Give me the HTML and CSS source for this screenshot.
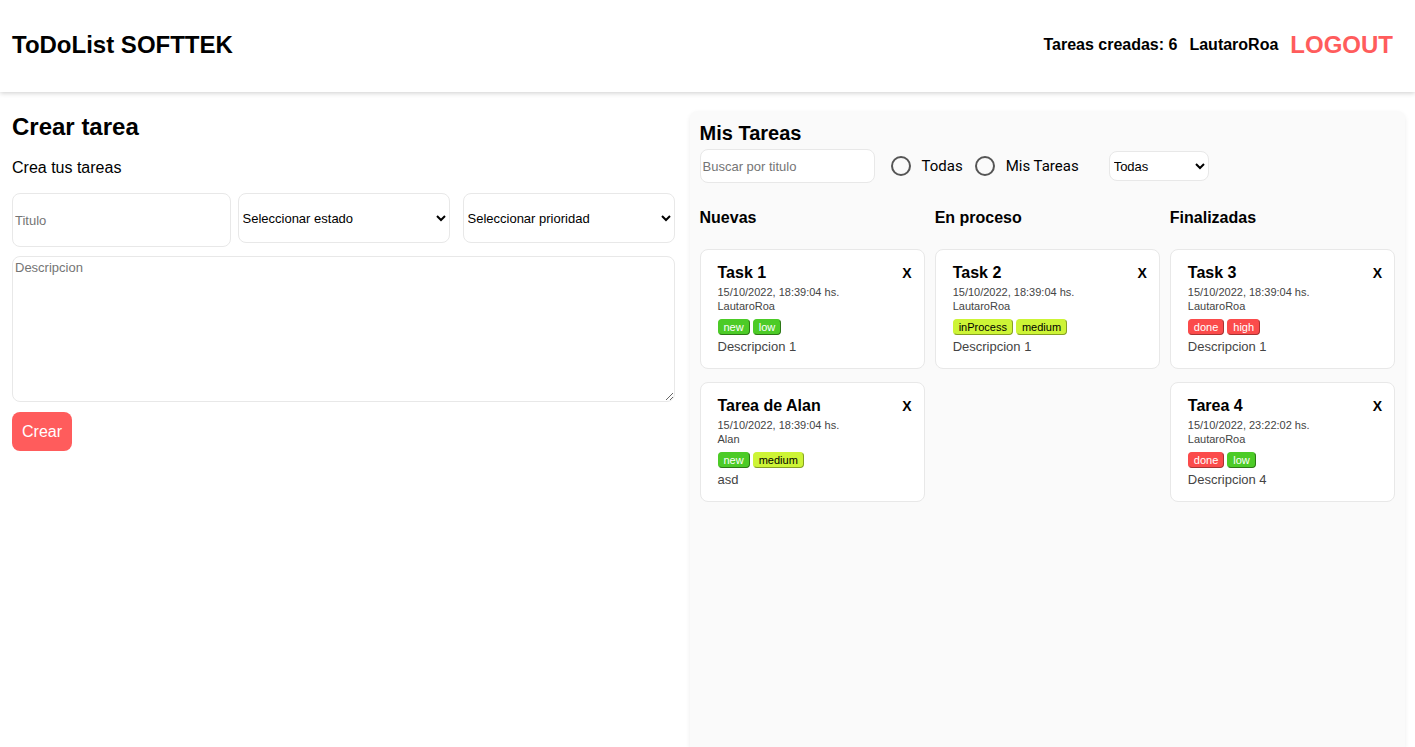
FILE: index.html
```html
<!DOCTYPE html>
<html lang="es">
<head>
<meta charset="utf-8">
<meta name="viewport" content="width=device-width, initial-scale=1">
<title>ToDoList SOFTTEK</title>
<link rel="stylesheet" href="styles.css">
</head>
<body>
<header class="header">
  <h1 class="brand">ToDoList SOFTTEK</h1>
  <div class="account">
    <span class="account-text">Tareas creadas: 6</span>
    <span class="account-text">LautaroRoa</span>
    <button class="logout" type="button">LOGOUT</button>
  </div>
</header>
<main class="main">
  <section class="create">
    <h2 class="create-title">Crear tarea</h2>
    <p class="create-lead">Crea tus tareas</p>
    <form class="form">
      <div class="fields">
        <input class="field field-title" type="text" placeholder="Titulo" aria-label="Titulo">
        <div class="selects">
          <select class="field field-select" aria-label="Estado"><option>Seleccionar estado</option><option>new</option><option>inProcess</option><option>done</option></select>
          <select class="field field-select" aria-label="Prioridad"><option>Seleccionar prioridad</option><option>low</option><option>medium</option><option>high</option></select>
        </div>
      </div>
      <textarea class="field field-description" placeholder="Descripcion" aria-label="Descripcion"></textarea>
      <button class="submit" type="button">Crear</button>
    </form>
  </section>
  <section class="panel">
    <h2 class="panel-title">Mis Tareas</h2>
    <div class="filters">
      <input class="field search" type="text" placeholder="Buscar por titulo" aria-label="Buscar por titulo">
      <div class="radios">
        <label class="radio-label"><input class="radio" type="radio" name="owner">Todas</label>
        <label class="radio-label"><input class="radio" type="radio" name="owner">Mis Tareas</label>
      </div>
      <select class="field priority-filter" aria-label="Filtrar por prioridad"><option>Todas</option><option>low</option><option>medium</option><option>high</option></select>
    </div>
    <div class="board">
      <div class="column">
        <h3 class="column-title">Nuevas</h3>
        <article class="card">
          <div class="card-head"><h4 class="card-title">Task 1</h4><button class="card-close" type="button">X</button></div>
          <p class="card-meta">15/10/2022, 18:39:04 hs.</p>
          <p class="card-meta">LautaroRoa</p>
          <div class="badges"><button class="badge green" type="button">new</button><button class="badge green" type="button">low</button></div>
          <p class="card-text">Descripcion 1</p>
        </article>
        <article class="card">
          <div class="card-head"><h4 class="card-title">Tarea de Alan</h4><button class="card-close" type="button">X</button></div>
          <p class="card-meta">15/10/2022, 18:39:04 hs.</p>
          <p class="card-meta">Alan</p>
          <div class="badges"><button class="badge green" type="button">new</button><button class="badge yellow" type="button">medium</button></div>
          <p class="card-text">asd</p>
        </article>
      </div>
      <div class="column">
        <h3 class="column-title">En proceso</h3>
        <article class="card">
          <div class="card-head"><h4 class="card-title">Task 2</h4><button class="card-close" type="button">X</button></div>
          <p class="card-meta">15/10/2022, 18:39:04 hs.</p>
          <p class="card-meta">LautaroRoa</p>
          <div class="badges"><button class="badge yellow" type="button">inProcess</button><button class="badge yellow" type="button">medium</button></div>
          <p class="card-text">Descripcion 1</p>
        </article>
      </div>
      <div class="column">
        <h3 class="column-title">Finalizadas</h3>
        <article class="card">
          <div class="card-head"><h4 class="card-title">Task 3</h4><button class="card-close" type="button">X</button></div>
          <p class="card-meta">15/10/2022, 18:39:04 hs.</p>
          <p class="card-meta">LautaroRoa</p>
          <div class="badges"><button class="badge red" type="button">done</button><button class="badge red" type="button">high</button></div>
          <p class="card-text">Descripcion 1</p>
        </article>
        <article class="card">
          <div class="card-head"><h4 class="card-title">Tarea 4</h4><button class="card-close" type="button">X</button></div>
          <p class="card-meta">15/10/2022, 23:22:02 hs.</p>
          <p class="card-meta">LautaroRoa</p>
          <div class="badges"><button class="badge red" type="button">done</button><button class="badge green" type="button">low</button></div>
          <p class="card-text">Descripcion 4</p>
        </article>
      </div>
    </div>
  </section>
</main>
</body>
</html>
```
FILE: styles.css
```css
* {
  box-sizing: border-box;
  margin: 0;
}

body {
  display: flex;
  flex-direction: column;
  min-height: 100vh;
  background: #fff;
  color: #000;
  font: 16px/20px "Liberation Sans", Arial, sans-serif;
}

button,
input,
select,
textarea {
  font-family: inherit;
}

.header {
  display: flex;
  align-items: center;
  justify-content: space-between;
  padding: 30px 22px 32px 12px;
  box-shadow: 0 1px 5px rgba(0, 0, 0, 0.2);
}

.brand {
  font-size: 24px;
  line-height: 30px;
}

.account {
  display: flex;
  align-items: center;
  gap: 12px;
}

.account-text {
  font-weight: bold;
}

.logout {
  padding: 0;
  border: 0;
  background: none;
  color: #ff5c5c;
  font-size: 24px;
  font-weight: bold;
  line-height: 30px;
}

.main {
  display: grid;
  flex: 1;
  grid-template-columns: 25fr 27fr;
  gap: 15px;
  padding: 19px 10px 0 12px;
}

.create-title {
  font-size: 24px;
  line-height: 32px;
}

.create-lead {
  margin: 15px 0;
  font-weight: 300;
}

.form {
  display: flex;
  flex-direction: column;
  align-items: flex-start;
}

.fields {
  display: grid;
  grid-template-columns: 1fr 2fr;
  align-items: start;
  gap: 7px;
  width: 100%;
}

.selects {
  display: flex;
  gap: 13px;
}

.field {
  border: 1px solid #e8e8e8;
  border-radius: 8px;
  background: #fff;
  color: #000;
  font-size: 13px;
}

.field::placeholder {
  color: #757575;
}

.field-title {
  width: 100%;
  height: 54px;
  padding: 1px 2px;
}

.field-select {
  flex: 1;
  height: 50px;
  min-width: 0;
}

.field-description {
  width: 100%;
  height: 146px;
  margin: 9px 0 10px;
  padding: 3px 2px;
}

.submit {
  padding: 10px;
  border: 0;
  border-radius: 8px;
  background: #ff5c5c;
  color: #fff;
  font-size: 16px;
  font-weight: 300;
  line-height: 19px;
}

.panel {
  padding: 10px;
  border-radius: 8px 8px 0 0;
  background: #fafafa;
  box-shadow: 0 2px 5px rgba(0, 0, 0, 0.08);
}

.panel-title {
  font-size: 20px;
  line-height: 24px;
}

.filters {
  display: flex;
  align-items: center;
  margin: 4px 0 22px;
}

.search {
  width: 175px;
  height: 34px;
  padding: 1px 2px;
}

.radios {
  display: flex;
  gap: 12px;
  margin: 0 30px 0 16px;
}

.radio-label {
  display: flex;
  align-items: center;
  gap: 11px;
  font-family: Roboto, sans-serif;
  font-size: 15px;
}

.radio {
  width: 20px;
  height: 20px;
  border: 2px solid #555;
  border-radius: 50%;
  appearance: none;
}

.radio:checked {
  background: #555;
  box-shadow: inset 0 0 0 3px #fafafa;
}

.priority-filter {
  width: 100px;
  height: 30px;
}

.board {
  display: grid;
  grid-template-columns: repeat(3, 1fr);
  gap: 10px;
}

.column-title {
  margin: 3px 0 21px;
  font-size: 16px;
  line-height: 20px;
}

.card {
  margin-bottom: 13px;
  padding: 13px 12px 13px 17px;
  border: 1px solid #e8e8e8;
  border-radius: 8px;
  background: #fff;
}

.card-head {
  display: flex;
  justify-content: space-between;
  margin-bottom: 2px;
}

.card-title {
  font-size: 16px;
  line-height: 20px;
}

.card-close {
  padding: 0;
  border: 0;
  background: none;
  font-size: 14px;
  font-weight: bold;
}

.card-meta {
  color: #444;
  font-size: 11px;
  line-height: 14px;
}

.badges {
  display: flex;
  gap: 3px;
  margin: 6px 0 4px;
}

.badge {
  padding: 0 5px;
  border: 1px outset;
  border-radius: 4px;
  font-size: 11px;
  line-height: 14px;
}

.green {
  border-color: #4ccb27;
  background: #4ccb27;
  color: #fff;
}

.yellow {
  border-color: #cdf436;
  background: #cdf436;
  color: #000;
}

.red {
  border-color: #fb4b4b;
  background: #fb4b4b;
  color: #fff;
}

.card-text {
  color: #444;
  font-size: 13px;
  line-height: 16px;
}
```
